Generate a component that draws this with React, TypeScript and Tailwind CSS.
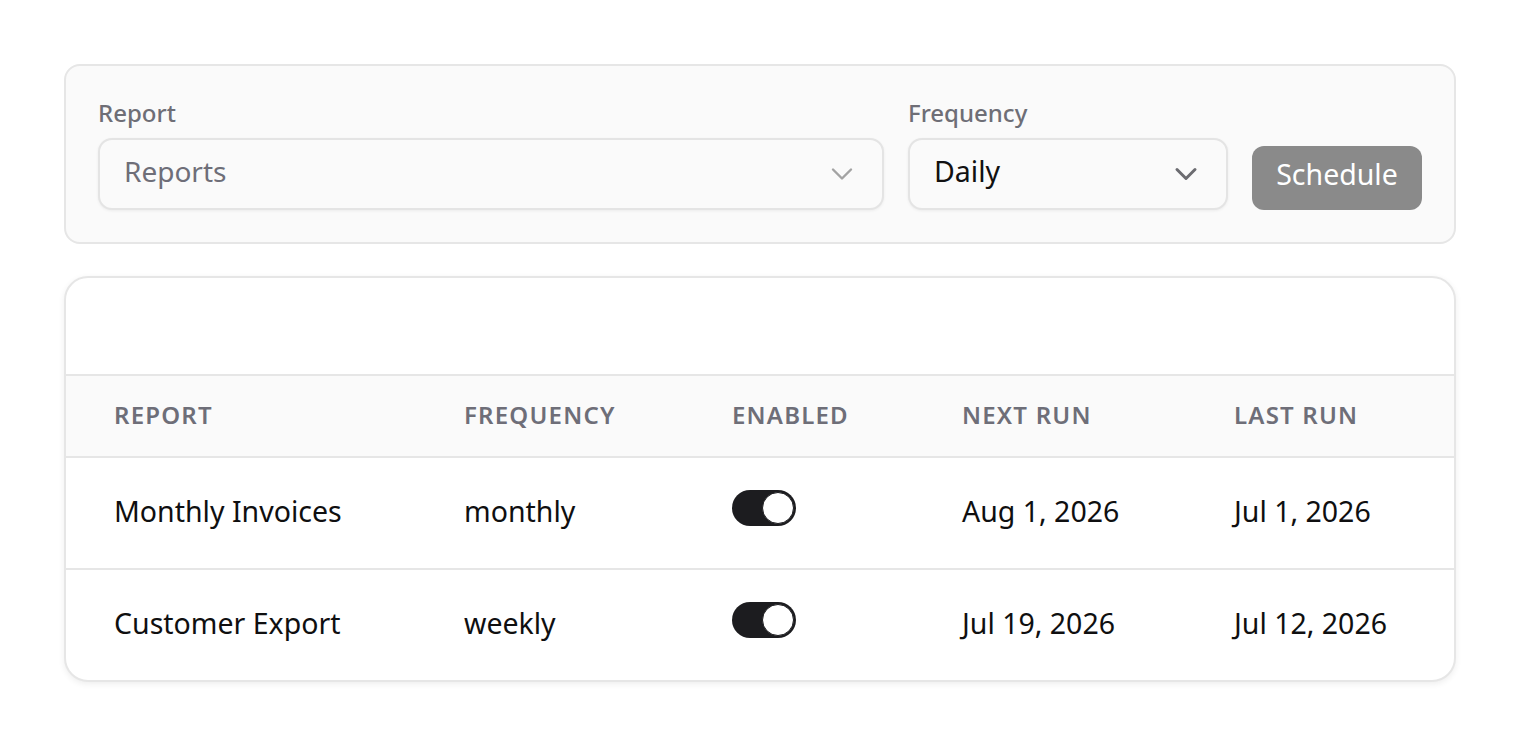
import React from "react";

const font = { fontFamily: '"Noto Sans", "Open Sans", sans-serif' };

function Chevron({ color = "#6b6b70", width = 2 }: { color?: string; width?: number }) {
  return (
    <svg width="36" height="36" viewBox="0 0 24 24" fill="none" stroke={color} strokeWidth={width} strokeLinecap="round" strokeLinejoin="round">
      <path d="m6 9 6 6 6-6" />
    </svg>
  );
}

function Toggle() {
  return (
    <div className="w-[64px] h-[36px] rounded-full bg-[#1c1c1f] flex items-center justify-end pr-[2px] mb-[10px]">
      <div className="w-[32px] h-[32px] rounded-full bg-white border border-[#1c1c1f]" />
    </div>
  );
}

const rows = [
  { name: "Monthly Invoices", freq: "monthly", next: "Aug 1, 2026", last: "Jul 1, 2026" },
  { name: "Customer Export", freq: "weekly", next: "Jul 19, 2026", last: "Jul 12, 2026" },
];

const cols = "grid grid-cols-[350px_268px_230px_272px_1fr]";

export default function App() {
  return (
    <div className="min-h-[748px] bg-white p-16 flex flex-col gap-8" style={font}>
      <div className="rounded-2xl border-2 border-[#e6e6e6] bg-[#fafafa] p-8 flex items-end gap-6">
        <div className="flex-1 flex flex-col gap-[10px]">
          <div className="text-[24px] leading-[30px] font-medium text-[#6e6e76]">Report</div>
          <div className="h-[72px] rounded-[14px] border-2 border-[#e4e4e4] bg-[#fafafa] shadow-[0_1px_3px_rgba(0,0,0,0.06)] flex items-center justify-between pl-[24px] pr-[22px]">
            <span className="text-[28px] text-[#6e6e78] mb-[6px]">Reports</span>
            <Chevron color="#a3a3a3" width={1.6} />
          </div>
        </div>
        <div className="w-[320px] flex flex-col gap-[10px]">
          <div className="text-[24px] leading-[30px] font-medium text-[#6e6e76]">Frequency</div>
          <div className="h-[72px] rounded-[14px] border-2 border-[#e4e4e4] bg-[#fafafa] shadow-[0_1px_3px_rgba(0,0,0,0.06)] flex items-center justify-between pl-[24px] pr-[22px]">
            <span className="text-[28.5px] text-[#111111] mb-[6px]">Daily</span>
            <Chevron />
          </div>
        </div>
        <button className="h-[64px] w-[170px] rounded-[12px] bg-[#8a8a8a] text-white text-[28.5px] flex items-center justify-center">
          <span className="mb-[8px]">Schedule</span>
        </button>
      </div>

      <div className="rounded-[24px] border-2 border-[#e6e6e6] bg-white shadow-[0_2px_6px_rgba(0,0,0,0.07)] overflow-hidden">
        <div className="h-[96px]" />
        <div className={`${cols} h-[84px] items-center bg-[#fafafa] border-y-2 border-[#e6e6e6] text-[24px] font-semibold tracking-wider text-[#6e6e78]`}>
          <div className="pl-[48px] mb-[2px]">REPORT</div>
          <div className="pl-[48px] mb-[2px]">FREQUENCY</div>
          <div className="pl-[48px] mb-[2px]">ENABLED</div>
          <div className="pl-[48px] mb-[2px]">NEXT RUN</div>
          <div className="pl-[48px] mb-[2px]">LAST RUN</div>
        </div>
        {rows.map((r, i) => (
          <div key={r.name} className={`${cols} items-center text-[28.5px] text-[#0f0f10] ${i < rows.length - 1 ? "h-[112px] border-b-2 border-[#e6e6e6]" : "h-[110px]"}`}>
            <div className="pl-[48px] mb-[4px]">{r.name}</div>
            <div className="pl-[48px] mb-[4px]">{r.freq}</div>
            <div className="pl-[48px] flex items-center"><Toggle /></div>
            <div className="pl-[48px] mb-[4px]">{r.next}</div>
            <div className="pl-[48px] mb-[4px]">{r.last}</div>
          </div>
        ))}
      </div>
    </div>
  );
}
